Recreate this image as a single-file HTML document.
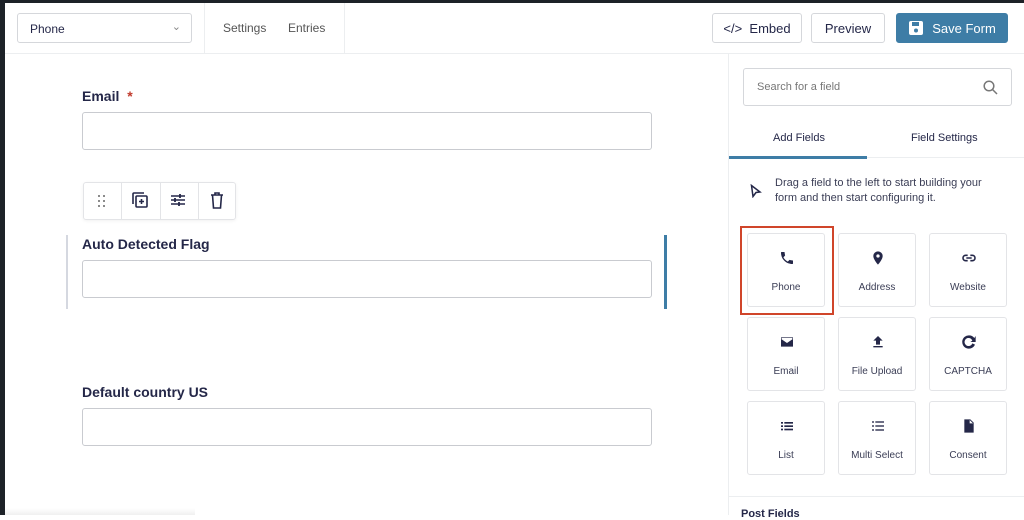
<!DOCTYPE html>
<html><head><style>
*{box-sizing:border-box;margin:0;padding:0}
body{width:1024px;height:515px;overflow:hidden;background:#fff;font-family:"Liberation Sans",sans-serif;color:#242748;position:relative}
.abs{position:absolute}
.btn{position:absolute;top:13px;height:30px;border:1px solid #d5d7db;border-radius:3px;font-size:13px;display:flex;align-items:center;justify-content:center;color:#242748;background:#fff}
.lbl{position:absolute;left:82px;font-size:14px;font-weight:bold;color:#242748}
.inp{position:absolute;left:82px;width:570px;height:38px;border:1px solid #c9cbd0;border-radius:3px}
.tile{position:absolute;width:78px;height:74px;border:1px solid #e3e4e7;border-radius:3px;font-size:10px;color:#3a3d55;text-align:center}
.tile svg{position:absolute;left:31px;top:16px}
.tile span{position:absolute;left:0;right:0;top:48px}
</style></head><body>
<div class="abs" style="left:0;top:0;width:1024px;height:3px;background:#1d2228"></div>
<div class="abs" style="left:0;top:0;width:5px;height:515px;background:#1d2228"></div>
<div class="abs" style="left:5px;top:53px;width:1019px;height:1px;background:#eceef0"></div>
<div class="abs" style="left:204px;top:3px;width:1px;height:50px;background:#eceef0"></div>
<div class="abs" style="left:344px;top:3px;width:1px;height:50px;background:#eceef0"></div>
<div class="abs" style="left:17px;top:13px;width:175px;height:30px;border:1px solid #d5d7db;border-radius:3px;font-size:12px;padding:8px 12px">Phone<span style="position:absolute;right:10px;top:6px;color:#888;font-size:11px">&#8964;</span></div>
<div class="abs" style="left:223px;top:21px;font-size:12px;color:#555">Settings</div>
<div class="abs" style="left:288px;top:21px;font-size:12px;color:#555">Entries</div>
<div class="btn" style="left:712px;width:90px">&lt;/&gt;&nbsp; Embed</div>
<div class="btn" style="left:811px;width:74px">Preview</div>
<div class="btn" style="left:896px;width:112px;background:#3e7da6;border-color:#3e7da6;color:#fff"><svg width="16" height="16" viewBox="0 0 16 16" style="margin-right:8px"><rect x="1" y="1" width="14" height="14" rx="2" fill="#fff"/><rect x="4" y="2" width="7" height="4" fill="#3e7da6"/><circle cx="8" cy="10.5" r="2" fill="#3e7da6"/></svg>Save Form</div>

<div class="lbl" style="top:88px">Email <span style="color:#c0392b;margin-left:4px">*</span></div>
<div class="inp" style="top:112px"></div>
<div class="abs" style="left:83px;top:182px;width:153px;height:38px;border:1px solid #e3e4e7;border-radius:3px;box-shadow:0 1px 3px rgba(0,0,0,.06)">
<div class="abs" style="left:37px;top:0;width:1px;height:36px;background:#e3e4e7"></div>
<div class="abs" style="left:76px;top:0;width:1px;height:36px;background:#e3e4e7"></div>
<div class="abs" style="left:114px;top:0;width:1px;height:36px;background:#e3e4e7"></div>
<svg class="abs" style="left:13px;top:11px" width="10" height="14"><g fill="#666"><circle cx="2" cy="2" r="1"/><circle cx="7" cy="2" r="1"/><circle cx="2" cy="7" r="1"/><circle cx="7" cy="7" r="1"/><circle cx="2" cy="12" r="1"/><circle cx="7" cy="12" r="1"/></g></svg>
<svg class="abs" style="left:47px;top:8px" width="18" height="18" viewBox="0 0 18 18" fill="none" stroke="#242748" stroke-width="1.6"><path d="M2 13V3a1 1 0 0 1 1-1h10"/><rect x="5" y="5" width="11" height="11" rx="1"/><path d="M10.5 8v5M8 10.5h5"/></svg>
<svg class="abs" style="left:86px;top:10px" width="16" height="14" viewBox="0 0 16 14" stroke="#242748" stroke-width="1.5"><path d="M1 3h14M1 7h14M1 11h14"/><path d="M10 1v4M5 5v4M9 9v4" stroke-width="1.8"/></svg>
<svg class="abs" style="left:126px;top:9px" width="14" height="17" viewBox="0 0 14 17" fill="none" stroke="#242748" stroke-width="1.6"><path d="M1 3h12M5 3V1h4v2M2.5 3l1 13h7l1-13"/></svg>
</div>
<div class="abs" style="left:66px;top:235px;width:2px;height:74px;background:#d5d8e0"></div>
<div class="abs" style="left:664px;top:235px;width:3px;height:74px;background:#3e7da6"></div>
<div class="lbl" style="top:236px">Auto Detected Flag</div>
<div class="inp" style="top:260px"></div>
<div class="lbl" style="top:384px">Default country US</div>
<div class="inp" style="top:408px"></div>
<div class="abs" style="left:5px;top:508px;width:190px;height:7px;background:linear-gradient(#fff,#f0f0f0)"></div>

<div class="abs" style="left:728px;top:54px;width:1px;height:461px;background:#eceef0"></div>
<div class="abs" style="left:743px;top:68px;width:269px;height:38px;border:1px solid #d5d7db;border-radius:3px;font-size:11px;color:#777;padding:12px 13px">Search for a field
<svg class="abs" style="right:13px;top:11px" width="15" height="15" viewBox="0 0 15 15" fill="none" stroke="#777" stroke-width="1.5"><circle cx="6" cy="6" r="4.8"/><path d="M9.5 9.5L14 14"/></svg></div>
<div class="abs" style="left:773px;top:132px;font-size:11px">Add Fields</div>
<div class="abs" style="left:911px;top:132px;font-size:11px">Field Settings</div>
<div class="abs" style="left:729px;top:157px;width:295px;height:1px;background:#eceef0"></div>
<div class="abs" style="left:729px;top:156px;width:138px;height:3px;background:#3e7da6"></div>
<svg class="abs" style="left:750px;top:184px" width="12" height="14" viewBox="0 0 12 14" fill="none" stroke="#242748" stroke-width="1.5"><path d="M1.5 1.5L10 8 6 8.5 3 12.5z"/></svg>
<div class="abs" style="left:775px;top:176px;font-size:11px;line-height:15px;color:#3a3d55;width:230px">Drag a field to the left to start building your form and then start configuring it.</div>

<div class="tile" style="left:747px;top:233px"><svg width="16" height="16" viewBox="0 0 24 24"><path fill="#242748" d="M6.6 10.8c1.4 2.8 3.8 5.1 6.6 6.6l2.2-2.2c.3-.3.7-.4 1-.2 1.1.4 2.3.6 3.6.6.6 0 1 .4 1 1V20c0 .6-.4 1-1 1C10.6 21 3 13.4 3 4c0-.6.4-1 1-1h3.5c.6 0 1 .4 1 1 0 1.3.2 2.5.6 3.6.1.3 0 .7-.2 1z"/></svg><span>Phone</span></div>
<div class="tile" style="left:838px;top:233px"><svg width="16" height="16" viewBox="0 0 24 24"><path fill="#242748" d="M12 2a7 7 0 0 0-7 7c0 5.2 7 13 7 13s7-7.8 7-13a7 7 0 0 0-7-7zm0 9.5a2.5 2.5 0 1 1 0-5 2.5 2.5 0 0 1 0 5z"/></svg><span>Address</span></div>
<div class="tile" style="left:929px;top:233px"><svg width="16" height="16" viewBox="0 0 24 24" fill="none" stroke="#242748" stroke-width="2.4"><path d="M10 8H7a4 4 0 0 0 0 8h3M14 8h3a4 4 0 0 1 0 8h-3M8 12h8"/></svg><span>Website</span></div>
<div class="tile" style="left:747px;top:317px"><svg width="16" height="16" viewBox="0 0 24 24"><path fill="#242748" d="M3 5h18v14H3zM4 6.5l8 5.5 8-5.5v-.5H4z"/><path d="M4 7l8 5.5L20 7" stroke="#fff" stroke-width="1.6" fill="none"/></svg><span>Email</span></div>
<div class="tile" style="left:838px;top:317px"><svg width="16" height="16" viewBox="0 0 24 24"><path fill="#242748" d="M9 16h6v-6h4l-7-7-7 7h4zM5 18h14v2H5z"/></svg><span>File Upload</span></div>
<div class="tile" style="left:929px;top:317px"><svg width="16" height="16" viewBox="0 0 24 24"><path fill="#242748" d="M12 2a10 10 0 1 0 9 14l-4-2a6 6 0 1 1 0-4l-3 2h8V3l-2 3a10 10 0 0 0-8-4z"/></svg><span>CAPTCHA</span></div>
<div class="tile" style="left:747px;top:401px"><svg width="16" height="16" viewBox="0 0 24 24" fill="#242748"><rect x="3" y="6" width="3" height="2.5"/><rect x="8" y="6" width="13" height="2.5"/><rect x="3" y="11" width="3" height="2.5"/><rect x="8" y="11" width="13" height="2.5"/><rect x="3" y="16" width="3" height="2.5"/><rect x="8" y="16" width="13" height="2.5"/></svg><span>List</span></div>
<div class="tile" style="left:838px;top:401px"><svg width="16" height="16" viewBox="0 0 24 24" fill="#242748"><rect x="3" y="5" width="3" height="2"/><rect x="8" y="5" width="13" height="2"/><rect x="3" y="11" width="3" height="2"/><rect x="8" y="11" width="13" height="2"/><rect x="3" y="17" width="3" height="2"/><rect x="8" y="17" width="13" height="2"/></svg><span>Multi Select</span></div>
<div class="tile" style="left:929px;top:401px"><svg width="16" height="16" viewBox="0 0 24 24"><path fill="#242748" d="M5 2h9l5 5v15H5zM13 3v5h5z"/></svg><span>Consent</span></div>
<div class="abs" style="left:740px;top:226px;width:94px;height:89px;border:2px solid #d0452a"></div>
<div class="abs" style="left:729px;top:496px;width:295px;height:1px;background:#eceef0"></div>
<div class="abs" style="left:741px;top:508px;font-size:11px;font-weight:bold">Post Fields</div>
</body></html>
